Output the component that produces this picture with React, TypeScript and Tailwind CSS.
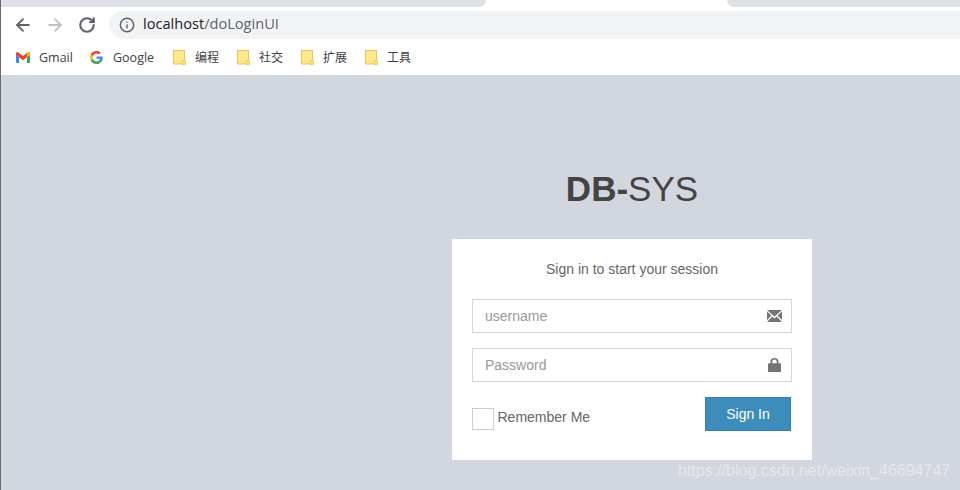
import React from 'react';
import { ArrowLeft, ArrowRight, RotateCw, Info } from 'lucide-react';

const sans = 'font-["Liberation_Sans",Arial,sans-serif]';
const ui = 'font-["Open_Sans","Noto_Sans_CJK_SC",sans-serif]';

const GmailIcon = () => (
  <svg width="14" height="11" viewBox="0 0 14 11">
    <path d="M0 2.500V10a1 1 0 0 0 1 1h2V5z" fill="#4285f4" />
    <path d="M14 2.500V10a1 1 0 0 1-1 1h-2V5z" fill="#34a853" />
    <path d="M3 11V4.600L7 7.600l4-3V11" fill="#fff" />
    <path d="M0 1.600C0 .4 1.400-.4 2.400.4L7 4l4.600-3.600C12.600-.4 14 .4 14 1.600V3L11 5.300 7 8.300 3 5.300 0 3z" fill="#ea4335" />
    <path d="M11 1.200l.6-.8C12.600-.4 14 .4 14 1.600V3L11 5.300z" fill="#fbbc04" />
  </svg>
);

const GoogleIcon = () => (
  <svg width="13" height="13" viewBox="0 0 48 48">
    <path fill="#ea4335" d="M24 9.500c3.500 0 6.700 1.200 9.200 3.600l6.900-6.900C35.900 2.400 30.500 0 24 0 14.600 0 6.500 5.400 2.600 13.200l8 6.200C12.500 13.600 17.800 9.500 24 9.500z" />
    <path fill="#4285f4" d="M47 24.500c0-1.600-.1-3.100-.4-4.500H24v9h13c-.6 3-2.200 5.500-4.800 7.200l7.700 6C44.400 38 47 31.800 47 24.500z" />
    <path fill="#fbbc05" d="M10.500 28.600c-.5-1.400-.8-3-.8-4.600s.3-3.200.8-4.600l-8-6.200C.9 16.400 0 20.100 0 24s.9 7.600 2.600 10.800z" />
    <path fill="#34a853" d="M24 48c6.500 0 11.900-2.100 15.900-5.800l-7.700-6c-2.200 1.400-4.900 2.300-8.200 2.300-6.200 0-11.500-4.200-13.400-9.900l-8 6.200C6.500 42.600 14.600 48 24 48z" />
  </svg>
);

const FolderIcon = () => (
  <svg width="13" height="15" viewBox="0 0 13 15">
    <rect x="0.500" y="0.500" width="11" height="13.500" fill="#fee78f" stroke="#eec74a" />
    <rect x="9.500" y="11" width="3" height="3.500" fill="#fee78f" stroke="#eec74a" strokeWidth="0.800" />
  </svg>
);

const MailIcon = () => (
  <svg width="15" height="12" viewBox="0 0 15 12" fill="#757575">
    <path d="M0 0h15L7.500 6.500z" />
    <path d="M0 1.500V10l4.500-4.500z" />
    <path d="M15 1.500V10l-4.500-4.500z" />
    <path d="M0 12l5.300-5.400L7.500 8.500l2.200-1.900L15 12z" />
  </svg>
);

const LockIcon = () => (
  <svg width="13" height="14" viewBox="0 0 13 14" fill="#757575">
    <path d="M0 6a.8.8 0 0 1 .8-.8H2.500V3.500a4 3.500 0 0 1 8 0v1.700h1.700a.8.8 0 0 1 .8.8V14H0zM4.300 5.200h4.400V3.500a2.200 1.900 0 0 0-4.400 0z" fillRule="evenodd" />
  </svg>
);

const bookmarks = [
  { label: 'Gmail', icon: <GmailIcon />, width: 'w-[74px]', gap: 'gap-[9px]', size: 'text-[12.5px]' },
  { label: 'Google', icon: <GoogleIcon />, width: 'w-[83px]', gap: 'gap-[10px]', size: 'text-[12.5px]' },
  { label: '编程', icon: <FolderIcon />, width: 'w-[64px]', gap: 'gap-[9px]', size: 'text-xs' },
  { label: '社交', icon: <FolderIcon />, width: 'w-[64px]', gap: 'gap-[9px]', size: 'text-xs' },
  { label: '扩展', icon: <FolderIcon />, width: 'w-[64px]', gap: 'gap-[9px]', size: 'text-xs' },
  { label: '工具', icon: <FolderIcon />, width: 'w-[64px]', gap: 'gap-[9px]', size: 'text-xs' },
];

export default function App() {
  return (
    <div className="relative h-[490px] w-[960px] overflow-hidden border-l border-[#6b6b6b] bg-[#d2d6de]">
      {/* browser chrome */}
      <div className="flex h-[7px] bg-white">
        <div className="w-[485px] rounded-br-lg bg-[#dee1e6]" />
        <div className="w-[241px]" />
        <div className="flex-1 rounded-bl-lg bg-[#dee1e6]" />
      </div>
      <div className="flex h-[32px] items-end bg-white pl-[12px]">
        <div className="flex h-[28px] items-center gap-[12px]">
          <ArrowLeft size={20} strokeWidth={2.200} className="text-[#5f6368]" />
          <ArrowRight size={20} strokeWidth={2.200} className="text-[#bdc1c6]" />
          <RotateCw size={18} strokeWidth={2.800} className="ml-px text-[#5f6368]" />
        </div>
        <div className="ml-[13px] flex h-[28px] flex-1 items-center rounded-l-full bg-[#f1f3f4] pl-[10px]">
          <Info size={16} strokeWidth={2.200} className="text-[#5f6368]" />
          <span className={`ml-[8px] -mt-[2px] text-[14.6px] text-[#5f6368] ${ui}`}>
            <span className="text-[#202124]">localhost</span>/doLoginUI
          </span>
        </div>
      </div>
      <div className="flex h-[36px] items-center bg-white pl-[15px]">
        {bookmarks.map((b) => (
          <div key={b.label} className={`flex items-center ${b.width} ${b.gap}`}>
            {b.icon}
            <span className={`mt-[2px] text-[#3c4043] ${b.size} ${ui}`}>{b.label}</span>
          </div>
        ))}
      </div>

      {/* login */}
      <div className={`ml-[451px] w-[360px] pt-[91px] ${sans}`}>
        <div className="mb-[28px] text-center text-[35px] leading-[45px] text-[#444]">
          <b>DB-</b>SYS
        </div>
        <div className="h-[221px] bg-white p-5 text-[#666]">
          <p className="pb-5 text-center text-sm leading-5">Sign in to start your session</p>
          <div className="mb-[15px] flex h-[34px] items-center justify-between border border-[#d2d6de] pr-[9px] pl-3">
            <span className="text-sm text-[#999]">username</span>
            <MailIcon />
          </div>
          <div className="mb-[15px] flex h-[34px] items-center justify-between border border-[#d2d6de] pr-[10px] pl-3">
            <span className="text-sm text-[#999]">Password</span>
            <LockIcon />
          </div>
          <div className="flex items-start justify-between pr-px">
            <div className="mt-[11px] flex items-start gap-[3.500px]">
              <div className="h-[22px] w-[22px] border border-[#d0ccc8] bg-white" />
              <span className="-mt-px text-sm leading-5">Remember Me</span>
            </div>
            <div className="flex h-[34px] w-[86px] items-center justify-center border border-[#367fa9] bg-[#3c8dbc] text-sm text-white">
              Sign In
            </div>
          </div>
        </div>
      </div>

      {/* watermark */}
      <div className={`absolute top-[461px] left-[677px] text-[16px] leading-5 text-white/45 ${sans}`}>
        https://blog.csdn.net/weixin_46694747
      </div>
    </div>
  );
}
